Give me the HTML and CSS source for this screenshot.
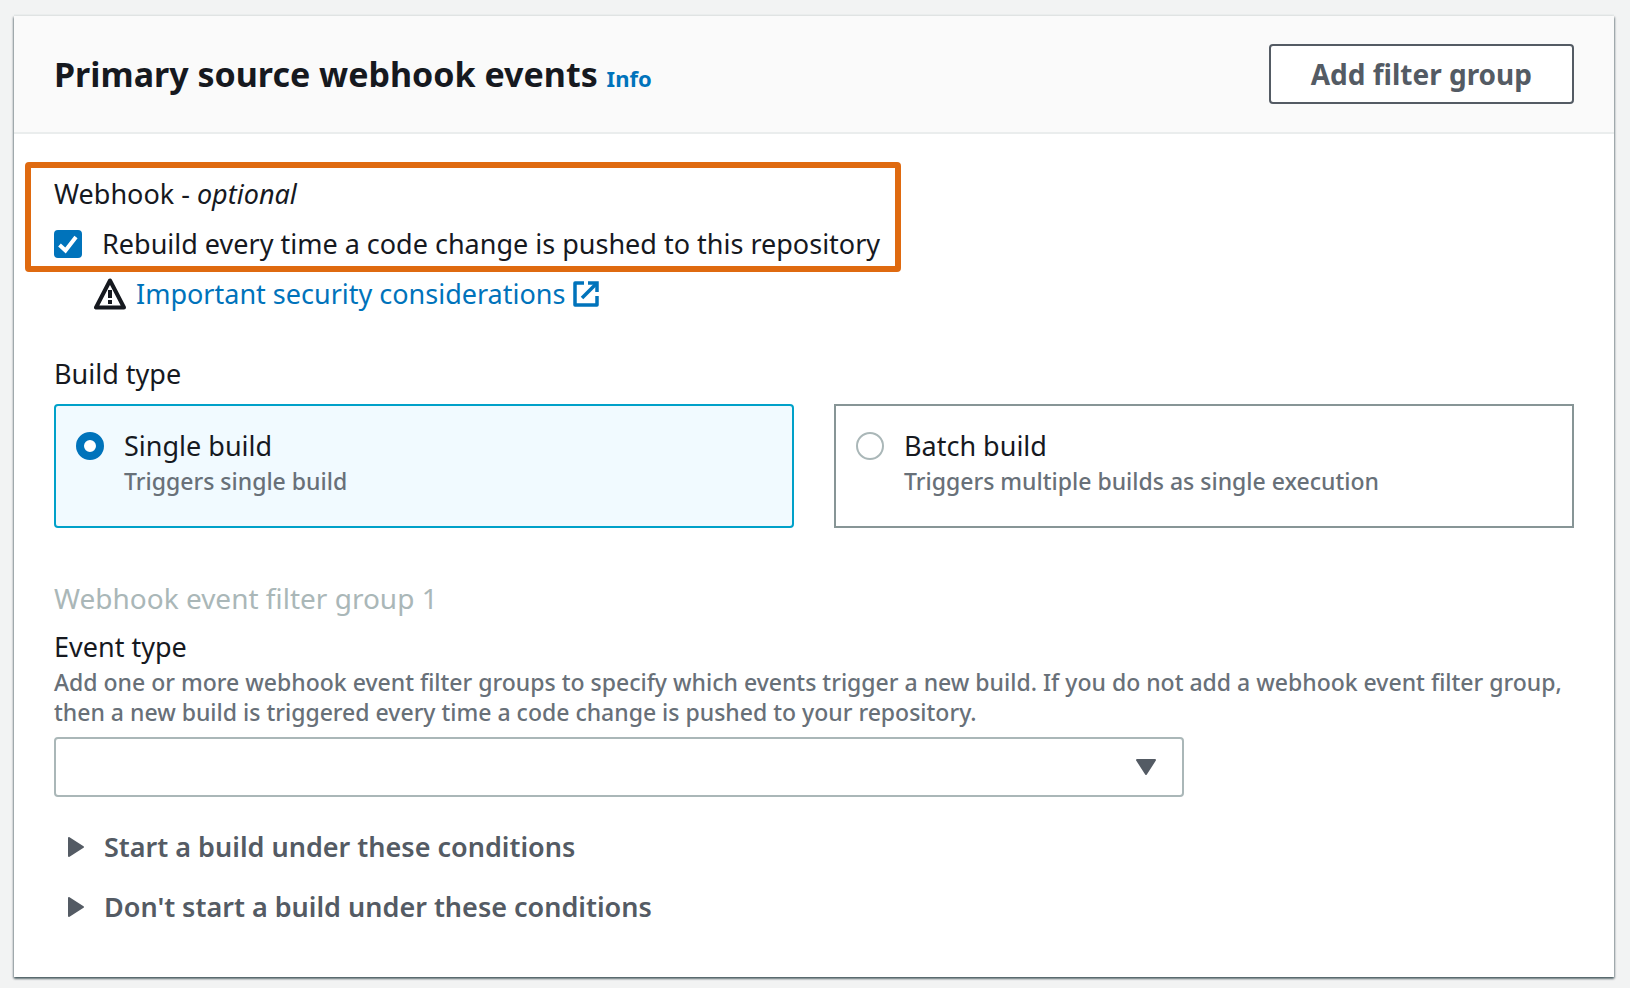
FILE: index.html
```html
<!DOCTYPE html>
<html lang="en">
<head>
<meta charset="utf-8">
<title>Primary source webhook events</title>
<link rel="stylesheet" href="styles.css">
</head>
<body>
<main class="panel">
  <header class="panel-header">
    <h1 class="panel-title">Primary source webhook events <a class="info-link" href="#info">Info</a></h1>
    <button class="button" type="button">Add filter group</button>
  </header>
  <form class="panel-body">
    <div class="highlight">
      <div class="field-label">Webhook - <em>optional</em></div>
      <label class="check-row">
        <input class="checkbox" type="checkbox" checked>
        <span>Rebuild every time a code change is pushed to this repository</span>
      </label>
    </div>
    <div class="notice">
      <svg class="icon-warning" viewBox="0 0 32 32" aria-hidden="true"><path d="M16 2.5 2 29.5h28z" fill="none" stroke="#16191f" stroke-width="4" stroke-linejoin="round"/><path d="M16 12v8M16 22v4" fill="none" stroke="#16191f" stroke-width="4"/></svg>
      <a class="link" href="#security">Important security considerations</a>
      <svg class="icon-external" viewBox="0 0 26 26" aria-hidden="true"><g fill="none" stroke="#0073bb" stroke-width="3.5" stroke-linejoin="round"><path d="M11 2H2v22h22v-9"/><path d="M15 2h9v9" stroke-linejoin="miter"/><path d="M23 3 9 17"/></g></svg>
    </div>

    <fieldset class="build-type">
      <legend class="field-label">Build type</legend>
      <div class="cards">
        <label class="card card-selected">
          <input class="radio" type="radio" name="build" checked>
          <span class="card-text"><span class="card-title">Single build</span><span class="description">Triggers single build</span></span>
        </label>
        <label class="card">
          <input class="radio" type="radio" name="build">
          <span class="card-text"><span class="card-title">Batch build</span><span class="description">Triggers multiple builds as single execution</span></span>
        </label>
      </div>
    </fieldset>

    <h2 class="group-title">Webhook event filter group 1</h2>
    <label class="field-label" for="event-type">Event type</label>
    <p class="description" id="event-help">Add one or more webhook event filter groups to specify which events trigger a new build. If you do not add a webhook event filter group, then a new build is triggered every time a code change is pushed to your repository.</p>
    <div class="select-wrap">
      <select class="select" id="event-type" aria-describedby="event-help"><option></option></select>
      <svg class="select-arrow" viewBox="0 0 20 16" aria-hidden="true"><path d="M1 1h18l-9 14z" fill="#545b64" stroke="#545b64" stroke-width="2" stroke-linejoin="round"/></svg>
    </div>
    <button class="expander" type="button">
      <svg class="expander-arrow" viewBox="0 0 16 20" aria-hidden="true"><path d="M1 1v18l14-9z" fill="#545b64" stroke="#545b64" stroke-width="2" stroke-linejoin="round"/></svg>
      <span>Start a build under these conditions</span>
    </button>
    <button class="expander" type="button">
      <svg class="expander-arrow" viewBox="0 0 16 20" aria-hidden="true"><path d="M1 1v18l14-9z" fill="#545b64" stroke="#545b64" stroke-width="2" stroke-linejoin="round"/></svg>
      <span>Don't start a build under these conditions</span>
    </button>
  </form>
</main>
</body>
</html>
```
FILE: styles.css
```css
* {
  box-sizing: border-box;
}

body {
  margin: 0;
  padding: 16px 16px 10px 14px;
  background: #f2f3f3;
  color: #16191f;
  font-family: "Noto Sans", "Open Sans", sans-serif;
  font-size: 27px;
  line-height: 40px;
}

.panel {
  background: #fff;
  box-shadow: 0 2px 2px 0 rgba(0, 28, 36, 0.45), 1px 1px 2px 0 rgba(0, 28, 36, 0.3), -1px 1px 2px 0 rgba(0, 28, 36, 0.3), 0 -2px 0 0 #eaeded;
}

.panel-header {
  display: flex;
  align-items: center;
  justify-content: space-between;
  padding: 28px 40px;
  background: #fafafa;
  border-bottom: 2px solid #eaeded;
}

.panel-title {
  margin: 0;
  padding-top: 4px;
  font-size: 34px;
  line-height: 44px;
  font-weight: 700;
}

.info-link {
  color: #0073bb;
  font-size: 22px;
  text-decoration: none;
}

.button {
  height: 60px;
  padding: 0 40px;
  border: 2px solid #545b64;
  border-radius: 4px;
  background: #fff;
  color: #545b64;
  font: inherit;
  font-size: 28px;
  font-weight: 700;
}

.panel-body {
  padding: 28px 40px 40px;
}

.highlight {
  width: fit-content;
  margin-left: -29px;
  padding: 6px 15px 2px 23px;
  border: 6px solid #df6a10;
  border-radius: 4px;
}

.field-label {
  display: block;
  padding: 0;
}

.check-row {
  display: flex;
  align-items: center;
  gap: 20px;
  margin-top: 10px;
}

.checkbox,
.radio {
  appearance: none;
  flex: none;
  width: 28px;
  height: 28px;
  margin: 0;
}

.checkbox {
  border: 2px solid #aab7b8;
  border-radius: 4px;
}

.checkbox:checked {
  border-color: #0073bb;
  background: #0073bb url("data:image/svg+xml,%3Csvg xmlns='http://www.w3.org/2000/svg' viewBox='0 0 24 24'%3E%3Cpath d='M3.5 13l6 5.5L20 5' fill='none' stroke='white' stroke-width='4'/%3E%3C/svg%3E") center / 24px no-repeat;
}

.notice {
  display: flex;
  align-items: center;
  margin: 2px 0 0 40px;
}

.icon-warning {
  width: 32px;
  height: 32px;
  margin-right: 10px;
}

.icon-external {
  width: 26px;
  height: 26px;
  margin-left: 8px;
}

.link {
  color: #0073bb;
  text-decoration: none;
}

.build-type {
  margin: 40px 0 0;
  padding: 0;
  border: 0;
}

.cards {
  display: grid;
  grid-template-columns: 1fr 1fr;
  gap: 40px;
  margin-top: 10px;
}

.card {
  display: flex;
  gap: 20px;
  align-items: flex-start;
  padding: 20px 20px 30px;
  border: 2px solid #879596;
}

.card-selected {
  border-color: #00a1c9;
  border-radius: 4px;
  background: #f1faff;
}

.radio {
  margin-top: 6px;
  border: 2px solid #aab7b8;
  border-radius: 50%;
}

.radio:checked {
  border: 8px solid #0073bb;
  background: #fff;
}

.card-title,
.description {
  display: block;
}

.description {
  margin: 0;
  color: #687078;
  font-size: 23px;
  line-height: 30px;
  font-weight: 500;
}

.group-title {
  margin: 50px 0 9px;
  color: #aab7b8;
  font-size: 28px;
  line-height: 40px;
  font-weight: 400;
}

.select-wrap {
  display: grid;
  align-items: center;
  width: calc(75% - 10px);
  margin: 10px 0 20px;
}

.select {
  grid-area: 1 / 1;
  appearance: none;
  width: 100%;
  height: 60px;
  padding: 0 60px 0 18px;
  border: 2px solid #aab7b8;
  border-radius: 4px;
  background: #fff;
  color: inherit;
  font: inherit;
}

.select-arrow {
  grid-area: 1 / 1;
  justify-self: end;
  width: 20px;
  height: 16px;
  margin-right: 28px;
  pointer-events: none;
}

.expander {
  display: flex;
  align-items: center;
  gap: 20px;
  padding: 10px 14px;
  border: 0;
  background: none;
  color: #545b64;
  font: inherit;
  font-weight: 600;
}

.expander-arrow {
  width: 16px;
  height: 20px;
}
```
